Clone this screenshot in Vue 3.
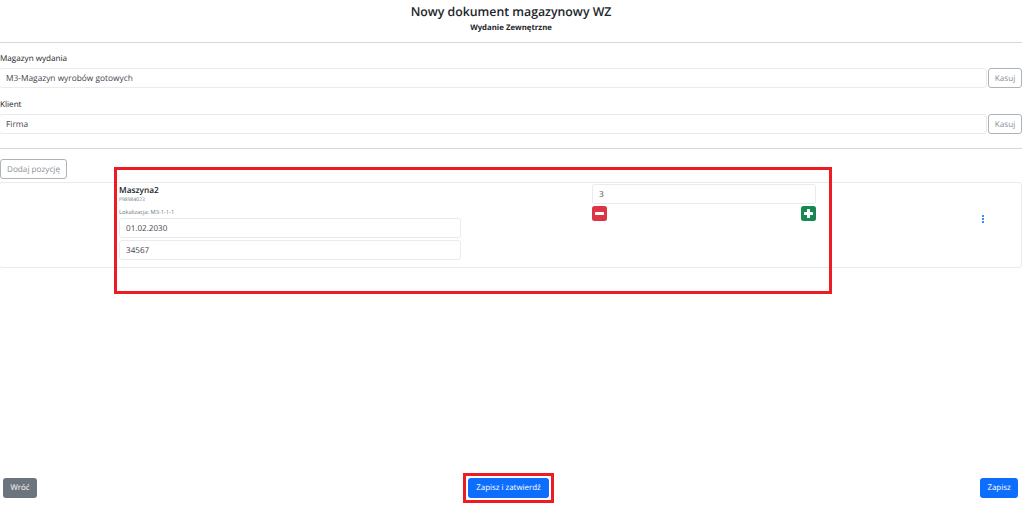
<template>
  <div class="page">
    <header class="head">
      <h1>Nowy dokument magazynowy WZ</h1>
      <h2>Wydanie Zewnętrzne</h2>
    </header>
    <hr class="line" />

    <section class="fields">
      <div v-for="f in fields" :key="f.label" class="field">
        <label>{{ f.label }}</label>
        <div class="input-row">
          <div class="input">{{ f.value }}</div>
          <button class="btn-outline">Kasuj</button>
        </div>
      </div>
    </section>
    <hr class="line second" />

    <div class="add-row">
      <button class="btn-outline add">Dodaj pozycję</button>
    </div>

    <div class="item">
      <div class="item-left">
        <div class="name">Maszyna2</div>
        <div class="code">P98984023</div>
        <div class="loc">Lokalizacja: M3-1-1-1</div>
        <div class="input">01.02.2030</div>
        <div class="input">34567</div>
      </div>
      <div class="item-qty">
        <div class="input qty">3</div>
        <div class="qty-btns">
          <svg class="square" viewBox="0 0 15 15" width="15" height="15">
            <rect width="15" height="15" rx="2.5" fill="#dc3545" />
            <rect x="3" y="6" width="9" height="3" rx="0.5" fill="#fff" />
          </svg>
          <svg class="square" viewBox="0 0 15 15" width="15" height="15">
            <rect width="15" height="15" rx="2.5" fill="#198754" />
            <rect x="3" y="6" width="9" height="3" rx="0.5" fill="#fff" />
            <rect x="6" y="3" width="3" height="9" rx="0.5" fill="#fff" />
          </svg>
        </div>
      </div>
      <svg class="kebab" viewBox="0 0 2 8" width="2" height="8">
        <rect width="2" height="2" fill="#3d8bfd" />
        <rect y="3" width="2" height="2" fill="#3d8bfd" />
        <rect y="6" width="2" height="2" fill="#3d8bfd" />
      </svg>
      <div class="mark"></div>
    </div>

    <footer class="foot">
      <button class="btn back">Wróć</button>
      <div class="confirm">
        <button class="btn primary">Zapisz i zatwierdź</button>
      </div>
      <button class="btn primary save">Zapisz</button>
    </footer>
  </div>
</template>

<script setup>
const fields = [
  { label: 'Magazyn wydania', value: 'M3-Magazyn wyrobów gotowych' },
  { label: 'Klient', value: 'Firma' },
]
</script>

<style>
html, body {
  margin: 0;
  background: #fff;
}
</style>

<style scoped>
.page {
  display: flex;
  flex-direction: column;
  height: 506px;
  overflow: hidden;
  font-family: "Open Sans", "Noto Sans", sans-serif;
  color: #212529;
  box-sizing: border-box;
  text-rendering: geometricPrecision;
}
.head {
  text-align: center;
  padding-top: 3px;
  padding-right: 2px;
}
.head h1 {
  margin: 0;
  font-size: 12.3px;
  line-height: 18px;
  font-weight: 600;
}
.head h2 {
  margin: 1px 0 0;
  font-size: 7.8px;
  line-height: 13px;
  font-weight: 700;
}
.line {
  margin: 7px 2px 0 0;
  border: none;
  border-top: 1px solid #d5d6d7;
  height: 0;
}
.line.second {
  margin-top: 14px;
}
.fields {
  padding-top: 9px;
}
.field + .field {
  margin-top: 10px;
}
.field label {
  display: block;
  font-size: 8.15px;
  line-height: 13px;
  margin-bottom: 3px;
}
.input-row {
  display: flex;
  gap: 1px;
  padding-right: 2px;
}
.input {
  box-sizing: border-box;
  height: 20px;
  line-height: 19px;
  padding: 0 6px;
  border: 1px solid #e9ebee;
  border-radius: 3px;
  font-size: 8.35px;
  color: #3f454b;
  background: #fff;
}
.input-row .input {
  flex: 1;
  margin-left: -1px;
}
.btn-outline {
  box-sizing: border-box;
  height: 20px;
  width: 34px;
  padding: 0;
  border: 1px solid #adb3b9;
  border-radius: 3px;
  background: #fff;
  color: #8a9299;
  font: 8.2px "Open Sans", "Noto Sans", sans-serif;
  text-rendering: geometricPrecision;
}
.add-row {
  display: flex;
  padding-top: 10px;
}
.btn-outline.add {
  width: 67px;
  font-size: 8.2px;
}
.item {
  position: relative;
  box-sizing: border-box;
  display: grid;
  grid-template-columns: 342px 224px auto;
  column-gap: 131px;
  align-items: start;
  height: 86px;
  margin: 3px 2px 0 -1px;
  padding: 1px 0 0 119px;
  border: 1px solid #e9ebee;
  border-radius: 3px;
}
.name {
  font-size: 8.3px;
  line-height: 12px;
  font-weight: 600;
  margin-top: 1px;
}
.code {
  font-size: 5px;
  line-height: 6px;
  color: #6c757d;
}
.loc {
  font-size: 5.7px;
  line-height: 8px;
  margin-top: 5px;
  color: #6c757d;
}
.item-left .input {
  font-size: 8.1px;
  margin-top: 2px;
}
.qty-btns {
  display: flex;
  justify-content: space-between;
  margin-top: 2px;
}
.square {
  display: block;
}
.kebab {
  position: absolute;
  left: 982px;
  top: 32px;
}
.mark {
  position: absolute;
  left: 114px;
  top: -16px;
  width: 718px;
  height: 127px;
  box-sizing: border-box;
  border: 3px solid #ed1c24;
  pointer-events: none;
}
.foot {
  margin-top: auto;
  display: flex;
  justify-content: space-between;
  align-items: center;
  padding: 0 6px 3px 3px;
}
.btn {
  box-sizing: border-box;
  height: 20px;
  padding: 0;
  border: none;
  border-radius: 3px;
  color: #fff;
  font: 7.9px "Open Sans", "Noto Sans", sans-serif;
  text-rendering: geometricPrecision;
}
.back {
  width: 34px;
  background: #6c757d;
}
.primary {
  background: #0d6efd;
}
.confirm {
  border: 3px solid #ed1c24;
  padding: 2px;
  display: flex;
}
.confirm .primary {
  width: 81px;
}
.save {
  width: 38px;
}
</style>
